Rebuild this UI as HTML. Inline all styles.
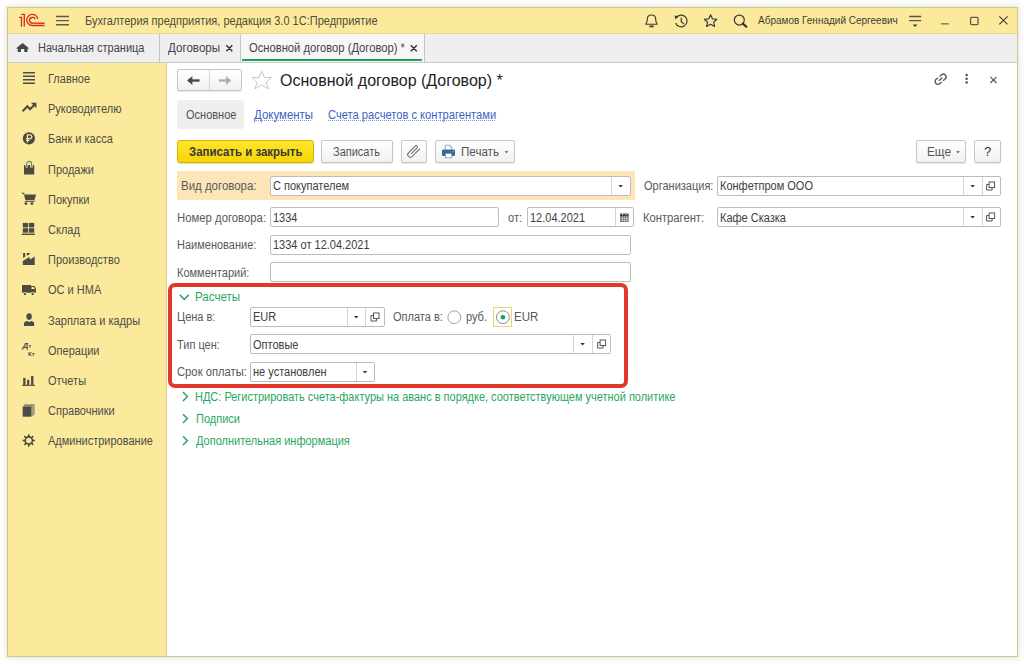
<!DOCTYPE html>
<html><head><meta charset="utf-8"><style>
*{box-sizing:border-box;margin:0;padding:0}
html,body{width:1024px;height:664px;overflow:hidden;background:#fff}
body{font-family:"Liberation Sans",sans-serif;font-size:11px;line-height:13px;color:#4d4d4d;position:relative}
.t{position:absolute;white-space:nowrap}
.b{position:absolute}
svg{position:absolute;left:0;top:0}
</style></head><body>
<div class="b" style="left:7px;top:7px;width:1011px;height:650px;border:1px solid #d5c87e;box-shadow:0 0 6px 1px rgba(110,110,130,.20);background:#fff"></div>
<div class="b" style="left:8px;top:8px;width:1009px;height:25px;background:#fbea9c"></div>
<div class="b" style="left:8px;top:33px;width:1009px;height:1px;background:#e9d98f"></div>
<div class="b" style="left:8px;top:34px;width:1009px;height:28px;background:#efefef"></div>
<div class="b" style="left:8px;top:62px;width:1009px;height:1px;background:#cacaca"></div>
<div class="b" style="left:8px;top:63px;width:158px;height:593px;background:#fbea9c"></div>
<div class="b" style="left:166px;top:63px;width:1px;height:593px;background:#ddd094"></div>
<div class="t" style="left:85px;top:14px;font-size:12px;line-height:14px;color:#504c3c;font-weight:400;transform:scaleX(0.917);transform-origin:0 0;">Бухгалтерия предприятия, редакция 3.0 1С:Предприятие</div>
<div class="t" style="left:758px;top:15px;font-size:10px;line-height:12px;color:#3f3d33;font-weight:400;">Абрамов Геннадий Сергеевич</div>
<div class="t" style="left:38px;top:41px;font-size:12px;line-height:14px;color:#444;font-weight:400;transform:scaleX(0.917);transform-origin:0 0;">Начальная страница</div>
<div class="b" style="left:159px;top:34px;width:1px;height:28px;background:#c6c6c6"></div>
<div class="t" style="left:168px;top:41px;font-size:12px;line-height:14px;color:#444;font-weight:400;transform:scaleX(0.967);transform-origin:0 0;">Договоры</div>
<div class="b" style="left:240px;top:34px;width:1px;height:28px;background:#c6c6c6"></div>
<div class="b" style="left:241px;top:34px;width:183px;height:28px;background:#f6f6f6"></div>
<div class="b" style="left:424px;top:34px;width:1px;height:28px;background:#c6c6c6"></div>
<div class="t" style="left:249px;top:41px;font-size:12px;line-height:14px;color:#444;font-weight:400;transform:scaleX(0.933);transform-origin:0 0;">Основной договор (Договор) *</div>
<div class="b" style="left:242px;top:59px;width:180px;height:2px;background:#1ea25a"></div>
<div class="t" style="left:48px;top:72px;font-size:12px;line-height:14px;color:#4e4c46;font-weight:400;transform:scaleX(0.917);transform-origin:0 0;">Главное</div>
<div class="t" style="left:48px;top:102px;font-size:12px;line-height:14px;color:#4e4c46;font-weight:400;transform:scaleX(0.917);transform-origin:0 0;">Руководителю</div>
<div class="t" style="left:48px;top:132px;font-size:12px;line-height:14px;color:#4e4c46;font-weight:400;transform:scaleX(0.917);transform-origin:0 0;">Банк и касса</div>
<div class="t" style="left:48px;top:163px;font-size:12px;line-height:14px;color:#4e4c46;font-weight:400;transform:scaleX(0.917);transform-origin:0 0;">Продажи</div>
<div class="t" style="left:48px;top:193px;font-size:12px;line-height:14px;color:#4e4c46;font-weight:400;transform:scaleX(0.917);transform-origin:0 0;">Покупки</div>
<div class="t" style="left:48px;top:223px;font-size:12px;line-height:14px;color:#4e4c46;font-weight:400;transform:scaleX(0.917);transform-origin:0 0;">Склад</div>
<div class="t" style="left:48px;top:253px;font-size:12px;line-height:14px;color:#4e4c46;font-weight:400;transform:scaleX(0.917);transform-origin:0 0;">Производство</div>
<div class="t" style="left:48px;top:283px;font-size:12px;line-height:14px;color:#4e4c46;font-weight:400;transform:scaleX(0.917);transform-origin:0 0;">ОС и НМА</div>
<div class="t" style="left:48px;top:314px;font-size:12px;line-height:14px;color:#4e4c46;font-weight:400;transform:scaleX(0.917);transform-origin:0 0;">Зарплата и кадры</div>
<div class="t" style="left:48px;top:344px;font-size:12px;line-height:14px;color:#4e4c46;font-weight:400;transform:scaleX(0.917);transform-origin:0 0;">Операции</div>
<div class="t" style="left:48px;top:374px;font-size:12px;line-height:14px;color:#4e4c46;font-weight:400;transform:scaleX(0.917);transform-origin:0 0;">Отчеты</div>
<div class="t" style="left:48px;top:404px;font-size:12px;line-height:14px;color:#4e4c46;font-weight:400;transform:scaleX(0.917);transform-origin:0 0;">Справочники</div>
<div class="t" style="left:48px;top:434px;font-size:12px;line-height:14px;color:#4e4c46;font-weight:400;transform:scaleX(0.917);transform-origin:0 0;">Администрирование</div>
<div class="b" style="left:177px;top:69px;width:65px;height:22px;border:1px solid #c6c6c6;border-radius:2px;background:linear-gradient(#ffffff,#f1f1f1);box-shadow:0 1px 1px rgba(0,0,0,.10)"></div>
<div class="b" style="left:209px;top:70px;width:1px;height:20px;background:#d6d6d6"></div>
<div class="t" style="left:280px;top:71px;font-size:16px;line-height:19px;color:#1e1e1e;font-weight:400;">Основной договор (Договор) *</div>
<div class="b" style="left:177px;top:100px;width:67px;height:29px;background:#efefef;border-radius:3px"></div>
<div class="t" style="left:186px;top:108px;font-size:12px;line-height:14px;color:#525252;font-weight:400;transform:scaleX(0.917);transform-origin:0 0;">Основное</div>
<div class="t" style="left:254px;top:108px;font-size:12px;line-height:14px;color:#3d63c0;font-weight:400;transform:scaleX(0.955);transform-origin:0 0;">Документы</div>
<div class="b" style="left:254px;top:120px;width:57px;height:1px;background:repeating-linear-gradient(90deg,#7f98d8 0 1px,transparent 1px 2px)"></div>
<div class="t" style="left:328px;top:108px;font-size:12px;line-height:14px;color:#3d63c0;font-weight:400;transform:scaleX(0.928);transform-origin:0 0;">Счета расчетов с контрагентами</div>
<div class="b" style="left:328px;top:120px;width:167px;height:1px;background:repeating-linear-gradient(90deg,#7f98d8 0 1px,transparent 1px 2px)"></div>
<div class="b" style="left:177px;top:140px;width:137px;height:23px;border:1px solid #d2b300;border-radius:3px;background:linear-gradient(#fde52e,#f6d600);box-shadow:0 1px 1px rgba(0,0,0,.15)"></div>
<div class="t" style="left:189px;top:145px;font-size:12px;line-height:14px;color:#383838;font-weight:700;transform:scaleX(0.954);transform-origin:0 0;">Записать и закрыть</div>
<div class="b" style="left:321px;top:140px;width:72px;height:23px;border:1px solid #c6c6c6;border-radius:2px;background:linear-gradient(#ffffff,#f1f1f1);box-shadow:0 1px 1px rgba(0,0,0,.10)"></div>
<div class="t" style="left:333px;top:145px;font-size:12px;line-height:14px;color:#555;font-weight:400;transform:scaleX(0.917);transform-origin:0 0;">Записать</div>
<div class="b" style="left:401px;top:140px;width:26px;height:23px;border:1px solid #c6c6c6;border-radius:2px;background:linear-gradient(#ffffff,#f1f1f1);box-shadow:0 1px 1px rgba(0,0,0,.10)"></div>
<div class="b" style="left:435px;top:140px;width:80px;height:23px;border:1px solid #c6c6c6;border-radius:2px;background:linear-gradient(#ffffff,#f1f1f1);box-shadow:0 1px 1px rgba(0,0,0,.10)"></div>
<div class="t" style="left:461px;top:145px;font-size:12px;line-height:14px;color:#555;font-weight:400;transform:scaleX(0.965);transform-origin:0 0;">Печать</div>
<div class="b" style="left:916px;top:140px;width:50px;height:23px;border:1px solid #c6c6c6;border-radius:2px;background:linear-gradient(#ffffff,#f1f1f1);box-shadow:0 1px 1px rgba(0,0,0,.10)"></div>
<div class="t" style="left:927px;top:145px;font-size:12px;line-height:14px;color:#555;font-weight:400;transform:scaleX(0.98);transform-origin:0 0;">Еще</div>
<div class="b" style="left:974px;top:140px;width:27px;height:23px;border:1px solid #c6c6c6;border-radius:2px;background:linear-gradient(#ffffff,#f1f1f1);box-shadow:0 1px 1px rgba(0,0,0,.10)"></div>
<div class="t" style="left:984px;top:144px;font-size:13px;line-height:15px;color:#333;font-weight:400;">?</div>
<div class="b" style="left:177px;top:171px;width:458px;height:29px;background:#fce5b6"></div>
<div class="t" style="left:181px;top:179px;font-size:12px;line-height:14px;color:#595959;font-weight:400;transform:scaleX(0.955);transform-origin:0 0;">Вид договора:</div>
<div class="b" style="left:270px;top:176px;width:361px;height:20px;border:1px solid #bcbcbc;border-radius:2px;background:#fff"></div>
<div class="b" style="left:611px;top:177px;width:1px;height:18px;background:#d4d4d4"></div>
<div class="t" style="left:273px;top:179px;font-size:12px;line-height:14px;color:#404040;font-weight:400;transform:scaleX(0.917);transform-origin:0 0;">С покупателем</div>
<div class="t" style="left:644px;top:179px;font-size:12px;line-height:14px;color:#595959;font-weight:400;transform:scaleX(0.917);transform-origin:0 0;">Организация:</div>
<div class="b" style="left:717px;top:176px;width:284px;height:20px;border:1px solid #bcbcbc;border-radius:2px;background:#fff"></div>
<div class="b" style="left:963px;top:177px;width:1px;height:18px;background:#d4d4d4"></div>
<div class="b" style="left:982px;top:177px;width:1px;height:18px;background:#d4d4d4"></div>
<div class="t" style="left:720px;top:179px;font-size:12px;line-height:14px;color:#404040;font-weight:400;transform:scaleX(0.917);transform-origin:0 0;">Конфетпром ООО</div>
<div class="t" style="left:177px;top:211px;font-size:12px;line-height:14px;color:#595959;font-weight:400;transform:scaleX(0.944);transform-origin:0 0;">Номер договора:</div>
<div class="b" style="left:270px;top:207px;width:229px;height:20px;border:1px solid #bcbcbc;border-radius:2px;background:#fff"></div>
<div class="t" style="left:273px;top:211px;font-size:12px;line-height:14px;color:#404040;font-weight:400;transform:scaleX(0.917);transform-origin:0 0;">1334</div>
<div class="t" style="left:508px;top:211px;font-size:12px;line-height:14px;color:#595959;font-weight:400;transform:scaleX(0.917);transform-origin:0 0;">от:</div>
<div class="b" style="left:527px;top:207px;width:107px;height:20px;border:1px solid #bcbcbc;border-radius:2px;background:#fff"></div>
<div class="b" style="left:615px;top:208px;width:1px;height:18px;background:#d4d4d4"></div>
<div class="t" style="left:530px;top:211px;font-size:12px;line-height:14px;color:#404040;font-weight:400;transform:scaleX(0.917);transform-origin:0 0;">12.04.2021</div>
<div class="t" style="left:643px;top:211px;font-size:12px;line-height:14px;color:#595959;font-weight:400;transform:scaleX(0.935);transform-origin:0 0;">Контрагент:</div>
<div class="b" style="left:717px;top:207px;width:284px;height:20px;border:1px solid #bcbcbc;border-radius:2px;background:#fff"></div>
<div class="b" style="left:963px;top:208px;width:1px;height:18px;background:#d4d4d4"></div>
<div class="b" style="left:982px;top:208px;width:1px;height:18px;background:#d4d4d4"></div>
<div class="t" style="left:720px;top:211px;font-size:12px;line-height:14px;color:#404040;font-weight:400;transform:scaleX(0.917);transform-origin:0 0;">Кафе Сказка</div>
<div class="t" style="left:177px;top:238px;font-size:12px;line-height:14px;color:#595959;font-weight:400;transform:scaleX(0.917);transform-origin:0 0;">Наименование:</div>
<div class="b" style="left:270px;top:235px;width:361px;height:20px;border:1px solid #bcbcbc;border-radius:2px;background:#fff"></div>
<div class="t" style="left:273px;top:238px;font-size:12px;line-height:14px;color:#404040;font-weight:400;transform:scaleX(0.917);transform-origin:0 0;">1334 от 12.04.2021</div>
<div class="t" style="left:177px;top:266px;font-size:12px;line-height:14px;color:#595959;font-weight:400;transform:scaleX(0.917);transform-origin:0 0;">Комментарий:</div>
<div class="b" style="left:270px;top:262px;width:361px;height:20px;border:1px solid #bcbcbc;border-radius:2px;background:#fff"></div>
<div class="b" style="left:168px;top:283px;width:460px;height:105px;border:4px solid #e2372b;border-radius:7px"></div>
<div class="t" style="left:195px;top:290px;font-size:12px;line-height:14px;color:#2aa661;font-weight:400;transform:scaleX(0.962);transform-origin:0 0;">Расчеты</div>
<div class="t" style="left:177px;top:310px;font-size:12px;line-height:14px;color:#595959;font-weight:400;transform:scaleX(0.917);transform-origin:0 0;">Цена в:</div>
<div class="b" style="left:250px;top:307px;width:135px;height:20px;border:1px solid #bcbcbc;border-radius:2px;background:#fff"></div>
<div class="b" style="left:347px;top:308px;width:1px;height:18px;background:#d4d4d4"></div>
<div class="b" style="left:365px;top:308px;width:1px;height:18px;background:#d4d4d4"></div>
<div class="t" style="left:253px;top:310px;font-size:12px;line-height:14px;color:#404040;font-weight:400;transform:scaleX(0.917);transform-origin:0 0;">EUR</div>
<div class="t" style="left:393px;top:310px;font-size:12px;line-height:14px;color:#595959;font-weight:400;transform:scaleX(0.917);transform-origin:0 0;">Оплата в:</div>
<div class="t" style="left:466px;top:310px;font-size:12px;line-height:14px;color:#595959;font-weight:400;transform:scaleX(0.917);transform-origin:0 0;">руб.</div>
<div class="b" style="left:493px;top:307px;width:19px;height:20px;border:1px solid #f2d36a;background:#fff"></div>
<div class="t" style="left:514px;top:310px;font-size:12px;line-height:14px;color:#595959;font-weight:400;transform:scaleX(0.96);transform-origin:0 0;">EUR</div>
<div class="t" style="left:177px;top:338px;font-size:12px;line-height:14px;color:#595959;font-weight:400;transform:scaleX(0.917);transform-origin:0 0;">Тип цен:</div>
<div class="b" style="left:250px;top:334px;width:361px;height:20px;border:1px solid #bcbcbc;border-radius:2px;background:#fff"></div>
<div class="b" style="left:573px;top:335px;width:1px;height:18px;background:#d4d4d4"></div>
<div class="b" style="left:592px;top:335px;width:1px;height:18px;background:#d4d4d4"></div>
<div class="t" style="left:253px;top:338px;font-size:12px;line-height:14px;color:#404040;font-weight:400;transform:scaleX(0.917);transform-origin:0 0;">Оптовые</div>
<div class="t" style="left:177px;top:365px;font-size:12px;line-height:14px;color:#595959;font-weight:400;transform:scaleX(0.937);transform-origin:0 0;">Срок оплаты:</div>
<div class="b" style="left:250px;top:362px;width:125px;height:20px;border:1px solid #bcbcbc;border-radius:2px;background:#fff"></div>
<div class="b" style="left:356px;top:363px;width:1px;height:18px;background:#d4d4d4"></div>
<div class="t" style="left:253px;top:365px;font-size:12px;line-height:14px;color:#404040;font-weight:400;transform:scaleX(0.917);transform-origin:0 0;">не установлен</div>
<div class="t" style="left:195px;top:390px;font-size:12px;line-height:14px;color:#2aa661;font-weight:400;transform:scaleX(0.915);transform-origin:0 0;">НДС: Регистрировать счета-фактуры на аванс в порядке, соответствующем учетной политике</div>
<div class="t" style="left:196px;top:412px;font-size:12px;line-height:14px;color:#2aa661;font-weight:400;transform:scaleX(0.917);transform-origin:0 0;">Подписи</div>
<div class="t" style="left:196px;top:434px;font-size:12px;line-height:14px;color:#2aa661;font-weight:400;transform:scaleX(0.917);transform-origin:0 0;">Дополнительная информация</div>
<svg width="1024" height="664" viewBox="0 0 1024 664"><g transform="translate(16,11)" fill="none" stroke="#da2a20" stroke-width="1.35"><path d="M3.1 6.4H5.5V15.4M5.2 3.4H8.3V15.4"/><path d="M21.8 8.0A5.55 5.55 0 1 0 16.35 14.5H28.5"/><path d="M19.2 8.3A2.9 2.9 0 1 0 16.5 12.2H28.5"/></g><g stroke="#5b5a4c" stroke-width="1.4"><path d="M56 16.5H69M56 20.6H69M56 24.8H69"/></g><g fill="none" stroke="#3b3b3b" stroke-width="1.15" stroke-linejoin="round"><path d="M645.8 24.2C647.2 22.6 647.3 21 647.3 19.2C647.3 16.6 649.2 15 651.5 15C653.8 15 655.7 16.6 655.7 19.2C655.7 21 655.8 22.6 657.2 24.2Z"/></g><path d="M650 26.4H653" stroke="#3b3b3b" stroke-width="1.6" stroke-linecap="round"/><g fill="none" stroke="#3b3b3b" stroke-width="1.2"><path d="M676.3 17.6A5.9 5.9 0 1 1 675.6 23"/><path d="M681.2 17.8V21.4L684 24.2"/></g><path d="M674.4 15.6L678.6 16.3L675.6 19.6Z" fill="#3b3b3b"/><path d="M710.6 14.8L712.5 18.9L716.9 19.3L713.6 22.2L714.6 26.5L710.6 24.2L706.6 26.5L707.6 22.2L704.3 19.3L708.7 18.9Z" fill="none" stroke="#3b3b3b" stroke-width="1.15" stroke-linejoin="round"/><circle cx="739.3" cy="20" r="5" fill="none" stroke="#3b3b3b" stroke-width="1.25"/><path d="M743 23.7L746.3 26.8" stroke="#2b2b2b" stroke-width="2.2" stroke-linecap="round"/><g stroke="#57554a" stroke-width="1.4"><path d="M909.2 16.5H921.2M909.2 20.6H921.2"/></g><path d="M912.9 24.5H917.3L915.1 26.9Z" fill="#333"/><path d="M941 23.8H948.8" stroke="#858160" stroke-width="1.5"/><rect x="970.6" y="17.4" width="7.4" height="7.2" rx="0.8" fill="none" stroke="#5c5a48" stroke-width="1.25"/><path d="M999.3 16.4L1007.6 24.4M1007.6 16.4L999.3 24.4" stroke="#3b3b3b" stroke-width="1.1"/><path d="M22.6 43L29.3 48.4H27.5V52H24.3V49H20.9V52H17.7V48.4H15.9Z" fill="#444"/><g stroke="#333" stroke-width="1.5"><path d="M226.3 45.3L232.3 51.3M232.3 45.3L226.3 51.3M410.8 45.3L416.8 51.3M416.8 45.3L410.8 51.3"/></g><g stroke="#4b4a44" stroke-width="1.6"><path d="M23 72.7H35M23 76.2H35M23 79.7H35M23 83.2H35"/></g><path d="M22.6 111.2L27.4 106.3L30 109.2L34.2 105" fill="none" stroke="#4b4a44" stroke-width="2"/><path d="M36.4 102.8V108.3L30.9 102.8Z" fill="#4b4a44"/><circle cx="28.9" cy="138.4" r="6.1" fill="#4b4a44"/><path d="M27.4 142.4V134.9H29.9A1.9 1.9 0 0 1 29.9 138.7H26.2M26.2 140.4H29.5" fill="none" stroke="#fbea9c" stroke-width="1.2"/><path d="M26.7 167.6V163.9A2.45 2.45 0 0 1 31.6 163.9V167.6" fill="none" stroke="#86836c" stroke-width="1.25"/><path d="M24 165.1H25.2L25.9 167.8H27.5L28.1 165.1H29.8L30.5 167.8H32.5L33.1 165.1H34.2V174.6H24Z" fill="#4b4a44"/><path d="M22.2 192.8L24.4 194.2" stroke="#4b4a44" stroke-width="1.3"/><path d="M24 194.4H36.2L34.4 200H25.4Z" fill="#4b4a44"/><path d="M25 201.3H34.8" stroke="#4b4a44" stroke-width="1.1"/><circle cx="25.9" cy="203.6" r="1.45" fill="#4b4a44"/><circle cx="31.9" cy="203.6" r="1.45" fill="#4b4a44"/><g fill="#4b4a44"><rect x="22.8" y="222.9" width="5.3" height="4.5"/><rect x="28.9" y="222.9" width="5.3" height="4.5"/><rect x="22.8" y="228.2" width="5.3" height="4.5"/><rect x="28.9" y="228.2" width="5.3" height="4.5"/><rect x="21.8" y="233.6" width="13" height="1.4"/></g><g fill="#4b4a44"><path d="M22.8 265.1V261L29.3 256.9L30.1 259.4L34.7 256.5V265.1Z"/><path d="M23.1 253H25.2V256.8L23.1 258.1Z"/><path d="M26.8 253H29.9V253.9L26.8 255.8Z"/></g><path d="M22 285.1H31V286.1H34.3L35.9 288.3V292.7H22Z" fill="#4b4a44"/><path d="M31.5 287H33.7L34.9 289.1H31.5Z" fill="#fbea9c"/><circle cx="24.9" cy="294" r="2.05" fill="#fbea9c"/><circle cx="32.6" cy="294" r="2.05" fill="#fbea9c"/><circle cx="24.9" cy="294" r="1.15" fill="#4b4a44"/><circle cx="32.6" cy="294" r="1.15" fill="#4b4a44"/><g fill="#4b4a44"><ellipse cx="29.1" cy="316.6" rx="2.7" ry="3.3"/><path d="M24 325.9V323.6C24 321.8 25.6 320.9 27.2 320.9C27.8 321.5 28.4 321.8 29.1 321.8C29.8 321.8 30.4 321.5 31 320.9C32.6 320.9 34.2 321.8 34.2 323.6V325.9Z"/></g><text x="22.4" y="348.1" font-family="Liberation Sans" font-size="8" font-weight="700" font-style="italic" fill="#4b4a44">Д</text><text x="28.5" y="347.9" font-family="Liberation Sans" font-size="5.6" font-weight="700" fill="#4b4a44">т</text><text x="27.9" y="356" font-family="Liberation Sans" font-size="6.2" font-weight="700" fill="#4b4a44">Кт</text><g fill="#4b4a44"><rect x="23.2" y="377.9" width="2.3" height="7"/><rect x="27.1" y="379.8" width="2.2" height="5.1"/><rect x="31.1" y="376" width="2.3" height="8.9"/><rect x="22.1" y="384.8" width="12.9" height="1.1"/></g><path d="M24.6 404.3H34.6V414.4L31.2 416.7V406.9H22.7Z" fill="#8c896f"/><path d="M32.4 405.6V415.4M33.6 404.9V414.8" fill="none" stroke="#c2bd98" stroke-width="0.5"/><rect x="22.7" y="406.9" width="8.5" height="9.8" fill="#4b4a44"/><circle cx="28.8" cy="440.5" r="3.6" fill="none" stroke="#4b4a44" stroke-width="1.6"/><path d="M32.40 440.50L35.00 440.50" stroke="#4b4a44" stroke-width="1.55"/><path d="M31.35 443.05L33.18 444.88" stroke="#4b4a44" stroke-width="1.55"/><path d="M28.80 444.10L28.80 446.70" stroke="#4b4a44" stroke-width="1.55"/><path d="M26.25 443.05L24.42 444.88" stroke="#4b4a44" stroke-width="1.55"/><path d="M25.20 440.50L22.60 440.50" stroke="#4b4a44" stroke-width="1.55"/><path d="M26.25 437.95L24.42 436.12" stroke="#4b4a44" stroke-width="1.55"/><path d="M28.80 436.90L28.80 434.30" stroke="#4b4a44" stroke-width="1.55"/><path d="M31.35 437.95L33.18 436.12" stroke="#4b4a44" stroke-width="1.55"/><path d="M188 80.5H199.6" stroke="#4a4a4a" stroke-width="2.4"/><path d="M187.2 80.5L192.4 76V85Z" fill="#4a4a4a"/><path d="M219 80.5H230.4" stroke="#b0b0b0" stroke-width="2.4"/><path d="M231.2 80.5L226 76V85Z" fill="#b0b0b0"/><path d="M261.7 71.2L264.4 77.5L271.4 77.5L266.2 82.5L268.4 88.8L261.7 85.1L255 88.8L257.2 82.5L252 77.5L259 77.5Z" fill="none" stroke="#c1c6ce" stroke-width="1" stroke-linejoin="round"/><g transform="translate(940.6,79.2) rotate(-40) scale(0.7) translate(-12,-12)" fill="none" stroke="#555" stroke-width="1.9"><path d="M10.6 8H7A4 4 0 0 0 7 16H10.6"/><path d="M13.4 8H17A4 4 0 0 1 17 16H13.4"/><path d="M8.6 12H15.4"/></g><g fill="#505050"><circle cx="966.6" cy="75" r="1.25"/><circle cx="966.6" cy="78.7" r="1.25"/><circle cx="966.6" cy="82.4" r="1.25"/></g><path d="M990.3 76.8L996.5 83M996.5 76.8L990.3 83" stroke="#555" stroke-width="1.1"/><path transform="translate(413.6,151.4) rotate(-45)" d="M6.4 2.6H-4.6A2.6 2.6 0 0 1 -4.6 -2.6H5A1.3 1.3 0 0 1 5 0H-3.4" fill="none" stroke="#666" stroke-width="1"/><path d="M445.3 149.8V145.3H450.1L452 147.2V149.8" fill="#fff" stroke="#7d98b9" stroke-width="0.8"/><path d="M450 145.3V147.3H452" fill="none" stroke="#7d98b9" stroke-width="0.6"/><rect x="442" y="149.6" width="13" height="6.4" rx="1.3" fill="#3d6694"/><rect x="445.4" y="153.4" width="6.4" height="4.4" fill="#fff" stroke="#6f8fb5" stroke-width="0.7"/><rect x="452.6" y="150.8" width="1.2" height="0.8" fill="#c9d6e6"/><path d="M504.6 151.2H508.4L506.5 153.2Z" fill="#555"/><path d="M956 151.2H959.8L957.9 153.2Z" fill="#555"/><path d="M618.4 185H622.8000000000001L620.6 187.4Z" fill="#333"/><path d="M970.4 185H974.8000000000001L972.6 187.4Z" fill="#333"/><path d="M970.4 216H974.8000000000001L972.6 218.4Z" fill="#333"/><path d="M354.0 316H358.4L356.2 318.4Z" fill="#333"/><path d="M580.4 343H584.8000000000001L582.6 345.4Z" fill="#333"/><path d="M362.8 371H367.2L365 373.4Z" fill="#333"/><g fill="none" stroke="#555" stroke-width="1"><rect x="989.1" y="182" width="5.5" height="5.5"/><path d="M989.1 184.5H986.6V190H992.1V187.5"/></g><g fill="none" stroke="#555" stroke-width="1"><rect x="989.1" y="213" width="5.5" height="5.5"/><path d="M989.1 215.5H986.6V221H992.1V218.5"/></g><g fill="none" stroke="#555" stroke-width="1"><rect x="373.5" y="313" width="5.5" height="5.5"/><path d="M373.5 315.5H371V321H376.5V318.5"/></g><g fill="none" stroke="#555" stroke-width="1"><rect x="600.1" y="340" width="5.5" height="5.5"/><path d="M600.1 342.5H597.6V348H603.1V345.5"/></g><rect x="620" y="213.4" width="8.6" height="3" rx="0.9" fill="#404040"/><rect x="620" y="216.2" width="8.6" height="5.8" fill="#6a6a6a"/><g fill="#e6e6e6"><rect x="620" y="217.9" width="8.6" height="0.55"/><rect x="620" y="219.9" width="8.6" height="0.55"/><rect x="622.2" y="216.2" width="0.5" height="5.8"/><rect x="624.3" y="216.2" width="0.5" height="5.8"/><rect x="626.4" y="216.2" width="0.5" height="5.8"/></g><g fill="#fff"><circle cx="622.5" cy="214.4" r="0.6"/><circle cx="626.1" cy="214.4" r="0.6"/></g><circle cx="454.3" cy="317.2" r="6.4" fill="#fff" stroke="#a0a0a0" stroke-width="1"/><circle cx="502.9" cy="317.2" r="6.4" fill="#fff" stroke="#8a8a8a" stroke-width="1"/><circle cx="502.9" cy="317.2" r="2.3" fill="#17a055"/><path d="M179.8 294.8L184.3 299.4L188.8 294.8" fill="none" stroke="#1fa05a" stroke-width="1.4"/><path d="M183 392.1L187.4 396.5L183 400.9" fill="none" stroke="#1fa05a" stroke-width="1.4"/><path d="M183 414.20000000000005L187.4 418.6L183 423.0" fill="none" stroke="#1fa05a" stroke-width="1.4"/><path d="M183 436.3L187.4 440.7L183 445.09999999999997" fill="none" stroke="#1fa05a" stroke-width="1.4"/></svg>
</body></html>
